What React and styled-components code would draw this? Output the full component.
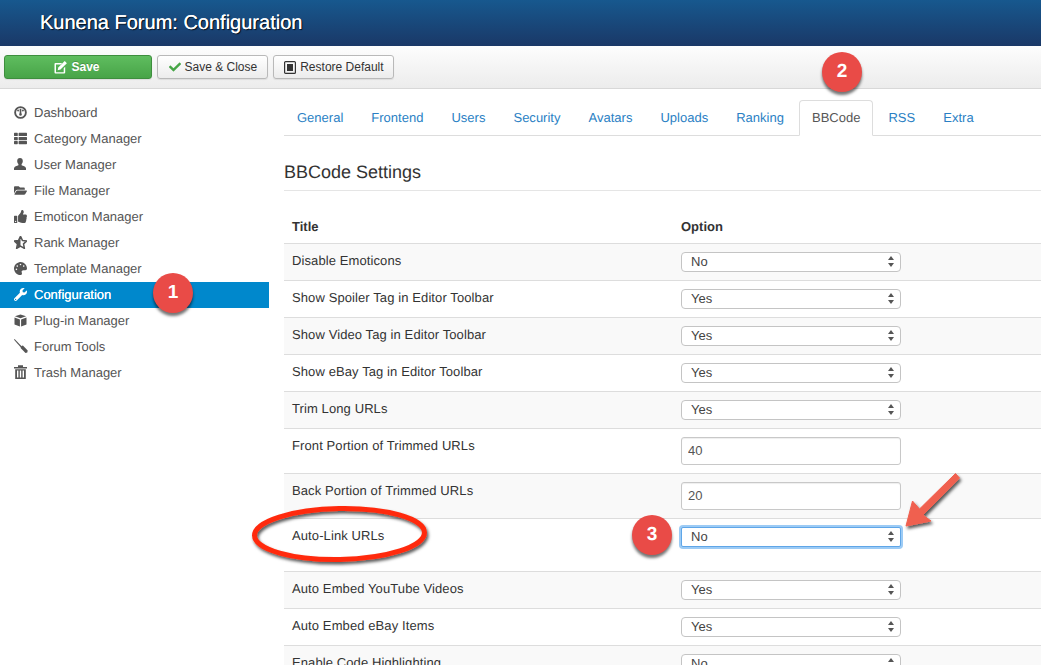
import React from "react";
import styled, { createGlobalStyle } from "styled-components";
import {
  FaThList,
  FaFolderOpen,
  FaThumbsUp,
  FaPalette,
  FaWrench,
  FaCheck,
} from "react-icons/fa";

const GlobalStyle = createGlobalStyle`
  html, body {
    margin: 0;
    padding: 0;
    height: 665px;
    overflow: hidden;
    background: #fff;
  }
  body {
    font-family: "Liberation Sans", Arial, sans-serif;
    font-size: 13px;
    color: #333;
    text-rendering: geometricPrecision;
  }
`;

function DashboardIcon() {
  return (
    <svg width="13" height="13" viewBox="0 0 14 14">
      <circle cx="7" cy="7" r="5.8" fill="none" stroke="currentColor" strokeWidth="2" />
      <path d="M6.1 3h1.8v5.5H6.1zM3.2 4.6l1.3-1 1.1 1.6-1.3 1zM10.8 4.6l-1.3-1-1.1 1.6 1.3 1z" fill="currentColor" />
      <circle cx="7" cy="9.2" r="1.4" fill="currentColor" />
    </svg>
  );
}

function UserIcon() {
  return (
    <svg width="12" height="12" viewBox="0 0 12 12">
      <path
        d="M6 0C4.2 0 3.2 1.3 3.2 3c0 1.2.5 2.4 1.2 3.1v1.1C3 7.9.3 8.4 0 10.2V12h12v-1.8c-.3-1.8-3-2.3-4.4-3V6.1C8.3 5.4 8.8 4.2 8.8 3 8.8 1.3 7.8 0 6 0z"
        fill="currentColor"
      />
    </svg>
  );
}

function StarIcon() {
  return (
    <svg width="13" height="13" viewBox="0 0 13 13">
      <path
        d="M6.5.3l1.9 4.1 4.4.5-3.3 3 .9 4.5-3.9-2.3-3.9 2.3.9-4.5L.2 4.9l4.4-.5z"
        fill="none"
        stroke="currentColor"
        strokeWidth="1.5"
        strokeLinejoin="round"
      />
      <path d="M6.5 1v9.4L2.9 12.3l.9-4.5L.6 5l4.3-.5z" fill="currentColor" />
    </svg>
  );
}

function PluginIcon() {
  return (
    <svg width="13" height="13" viewBox="0 0 13 13">
      <path d="M6.5.4l5.6 1.9-5.6 2L.9 2.3z" fill="currentColor" />
      <path d="M.5 3.4l5.4 2v7.2L.5 10.4zM12.5 3.4l-5.4 2v7.2l5.4-2.2z" fill="currentColor" />
    </svg>
  );
}

function ToolsIcon() {
  return (
    <svg width="14" height="14" viewBox="0 0 14 14">
      <path d="M.6 0l7.2 7.6-.9.9L0 .8z" fill="currentColor" />
      <path d="M7.4 7l1.5-.4 4.8 5-.4 1.9-1.8.4-4.9-5z" fill="currentColor" />
    </svg>
  );
}

function TrashIcon() {
  return (
    <svg width="13" height="14" viewBox="0 0 13 14">
      <path d="M0 2h13v1.6H0zM4 .3h5V2H4z" fill="currentColor" />
      <path d="M1.2 4.3h10.6V14H1.2zM3 5.5v7h1.4v-7zM5.8 5.5v7h1.4v-7zM8.6 5.5v7H10v-7z" fill="currentColor" fillRule="evenodd" />
    </svg>
  );
}

function RestoreIcon() {
  return (
    <svg width="12" height="13" viewBox="0 0 12 13">
      <rect x="0.6" y="0.6" width="10.8" height="11.8" rx="1" fill="none" stroke="#333" strokeWidth="1.2" />
      <rect x="3" y="3" width="6" height="7" fill="#333" />
    </svg>
  );
}

function EditIcon() {
  return (
    <svg width="13" height="13" viewBox="0 0 13 13">
      <path d="M1.8 2h6.4L6.7 3.5H2v7.7h7.7V7.2l1.5-1.5v5.8c0 .5-.4.9-.9.9H1.4c-.5 0-.9-.4-.9-.9V3c0-.6.6-1 1.3-1z" fill="#fff" />
      <path d="M10.7 0l2.2 2.2-6.4 6.4-2.8.6.6-2.8z" fill="#fff" />
    </svg>
  );
}

const menuItems = [
  { label: "Dashboard", icon: <DashboardIcon /> },
  { label: "Category Manager", icon: <FaThList size={13} /> },
  { label: "User Manager", icon: <UserIcon /> },
  { label: "File Manager", icon: <FaFolderOpen size={13} /> },
  { label: "Emoticon Manager", icon: <FaThumbsUp size={13} /> },
  { label: "Rank Manager", icon: <StarIcon /> },
  { label: "Template Manager", icon: <FaPalette size={13} /> },
  { label: "Configuration", icon: <FaWrench size={13} />, active: true },
  { label: "Plug-in Manager", icon: <PluginIcon /> },
  { label: "Forum Tools", icon: <ToolsIcon /> },
  { label: "Trash Manager", icon: <TrashIcon /> },
];

const tabs = ["General", "Frontend", "Users", "Security", "Avatars", "Uploads", "Ranking", "BBCode", "RSS", "Extra"];

const rows = [
  { title: "Disable Emoticons", value: "No" },
  { title: "Show Spoiler Tag in Editor Toolbar", value: "Yes" },
  { title: "Show Video Tag in Editor Toolbar", value: "Yes" },
  { title: "Show eBay Tag in Editor Toolbar", value: "Yes" },
  { title: "Trim Long URLs", value: "Yes" },
  { title: "Front Portion of Trimmed URLs", input: "40" },
  { title: "Back Portion of Trimmed URLs", input: "20" },
  { title: "Auto-Link URLs", value: "No", focused: true },
  { title: "Auto Embed YouTube Videos", value: "Yes" },
  { title: "Auto Embed eBay Items", value: "Yes" },
  { title: "Enable Code Highlighting", value: "No" },
];

function SelectField({ value, focused }) {
  return (
    <SelectWrap>
      <Select defaultValue={value} $focused={focused}>
        <option>Yes</option>
        <option>No</option>
      </Select>
      <Arrows width="6" height="11" viewBox="0 0 6 11">
        <path d="M3 0L6 4H0zM3 11L0 7h6z" fill="#555" />
      </Arrows>
    </SelectWrap>
  );
}

export default function App() {
  return (
    <Page>
      <GlobalStyle />
      <Header>
        <PageTitle>Kunena Forum: Configuration</PageTitle>
      </Header>
      <Toolbar>
        <SaveButton>
          <EditIcon />
          Save
        </SaveButton>
        <Button>
          <FaCheck size={12} color="#46a546" />
          Save &amp; Close
        </Button>
        <Button>
          <RestoreIcon />
          Restore Default
        </Button>
      </Toolbar>
      <Body>
        <Sidebar>
          {menuItems.map((item) => (
            <MenuItem key={item.label} $active={item.active}>
              <MenuIcon>{item.icon}</MenuIcon>
              {item.label}
            </MenuItem>
          ))}
        </Sidebar>
        <Content>
          <Tabs>
            {tabs.map((t) => (
              <Tab key={t} $active={t === "BBCode"}>
                {t}
              </Tab>
            ))}
          </Tabs>
          <Heading>BBCode Settings</Heading>
          <Table>
            <thead>
              <tr>
                <HeadCell $width={389}>Title</HeadCell>
                <HeadCell>Option</HeadCell>
              </tr>
            </thead>
            <tbody>
              {rows.map((r) => (
                <Row key={r.title}>
                  <Cell>{r.title}</Cell>
                  <Cell $extra={r.focused}>
                    {r.input ? (
                      <TextInput defaultValue={r.input} />
                    ) : (
                      <SelectField value={r.value} focused={r.focused} />
                    )}
                  </Cell>
                </Row>
              ))}
            </tbody>
          </Table>
        </Content>
      </Body>

      <Badge $x={173} $y={293}>1</Badge>
      <Badge $x={842} $y={72}>2</Badge>
      <Badge $x={652} $y={535}>3</Badge>

      <Marks width="1041" height="665" viewBox="0 0 1041 665">
        <defs>
          <filter id="markShadow" x="-20%" y="-20%" width="140%" height="150%">
            <feDropShadow dx="1.5" dy="2.5" stdDeviation="1.5" floodColor="#000" floodOpacity="0.65" />
          </filter>
        </defs>
        <g filter="url(#markShadow)">
          <ellipse cx="339.5" cy="534" rx="85" ry="25.5" fill="none" stroke="#ff2a0c" strokeWidth="5" transform="rotate(-1 339.5 534)" />
          <path
            d="M955.5 473.5 L959.5 478 L923 515 L931 521 L906 526 L912.5 501 L919.5 509 Z"
            fill="#f0604f"
            stroke="#f0604f"
            strokeWidth="1"
            strokeLinejoin="round"
          />
        </g>
      </Marks>
    </Page>
  );
}

const Page = styled.div`
  position: relative;
  width: 1041px;
  height: 665px;
  overflow: hidden;
`;

const Header = styled.header`
  height: 46px;
  display: flex;
  align-items: center;
  padding: 0 0 0 40px;
  box-sizing: border-box;
  background: linear-gradient(to bottom, #17588e 0%, #1a3867 100%);
`;

const PageTitle = styled.h1`
  margin: 0;
  font-size: 20px;
  font-weight: 400;
  line-height: 46px;
  color: #fff;
  text-shadow: 0 0 0.6px #fff, 1px 1px 1px rgba(0, 0, 0, 0.8);
`;

const Toolbar = styled.div`
  height: 43px;
  box-sizing: border-box;
  display: flex;
  align-items: flex-start;
  gap: 5px;
  padding: 9px 0 0 4px;
  background: linear-gradient(to bottom, #fdfdfd 0%, #ececec 100%);
  border-bottom: 1px solid #d8d8d8;
`;

const Button = styled.button`
  height: 24px;
  box-sizing: border-box;
  display: inline-flex;
  align-items: center;
  justify-content: center;
  gap: 4px;
  padding: 0 9.5px 0 10.5px;
  font-family: inherit;
  font-size: 12px;
  color: #333;
  background: linear-gradient(to bottom, #fff 0%, #ececec 100%);
  border: 1px solid #b9b9b9;
  border-radius: 3px;
  box-shadow: 0 1px 1px rgba(0, 0, 0, 0.08);
`;

const SaveButton = styled(Button)`
  width: 148px;
  padding: 0 2px 0 0;
  font-weight: 700;
  color: #fff;
  background: linear-gradient(to bottom, #5fbd5f 0%, #48a448 100%);
  border-color: #3e8e3e;
  text-shadow: 0 -1px 0 rgba(0, 0, 0, 0.2);
`;

const Body = styled.div`
  display: flex;
`;

const Sidebar = styled.nav`
  width: 269px;
  flex: none;
  padding-top: 11px;
`;

const MenuItem = styled.a`
  display: flex;
  align-items: center;
  height: 26px;
  box-sizing: border-box;
  padding: 0 0 2px 14px;
  color: ${(p) => (p.$active ? "#fff" : "#555")};
  background: ${(p) => (p.$active ? "#0088cc" : "transparent")};
  text-shadow: ${(p) => (p.$active ? "0 0 0.6px #fff" : "none")};
`;

const MenuIcon = styled.span`
  width: 20px;
  flex: none;
  display: flex;
  align-items: center;
`;

const Content = styled.main`
  flex: 1;
  min-width: 0;
  padding: 11px 0 0 15px;
`;

const Tabs = styled.div`
  display: flex;
  height: 36px;
  box-sizing: border-box;
  border-bottom: 1px solid #ddd;
`;

const Tab = styled.a`
  height: ${(p) => (p.$active ? "36px" : "35px")};
  box-sizing: border-box;
  padding: 0 ${(p) => (p.$active ? "12px" : "13px")};
  margin-right: 2px;
  line-height: ${(p) => (p.$active ? "33px" : "35px")};
  letter-spacing: 0.01px;
  color: ${(p) => (p.$active ? "#555" : "#2a7fc4")};
  border: ${(p) => (p.$active ? "1px solid #ddd" : "0 solid transparent")};
  border-bottom: ${(p) => (p.$active ? "1px solid #fff" : "0")};
  background: #fff;
  border-radius: 4px 4px 0 0;
`;

const Heading = styled.h2`
  margin: 24px 0 17px;
  padding-bottom: 6px;
  font-size: 18px;
  line-height: 24px;
  font-weight: 400;
  color: #333;
  border-bottom: 1px solid #e5e5e5;
`;

const Table = styled.table`
  width: 757px;
  border-collapse: collapse;
  table-layout: fixed;
`;

const HeadCell = styled.th`
  width: ${(p) => (p.$width ? `${p.$width}px` : "auto")};
  height: 35px;
  padding: 2px 8px 0;
  box-sizing: border-box;
  text-align: left;
  font-size: 13px;
  font-weight: 700;
  color: #333;
  border-bottom: 1px solid #ddd;
`;

const Row = styled.tr`
  border-bottom: 1px solid #ddd;
  &:nth-child(odd) {
    background: #f9f9f9;
  }
`;

const Cell = styled.td`
  padding: 8px 8px ${(p) => (p.$extra ? "24px" : "8px")};
  vertical-align: top;
  line-height: 18px;
  letter-spacing: 0.1px;
  color: #333;
`;

const SelectWrap = styled.div`
  position: relative;
  width: 220px;
  height: 20px;
`;

const Select = styled.select`
  appearance: none;
  display: block;
  width: 100%;
  height: 100%;
  box-sizing: border-box;
  padding: 0 20px 0 9px;
  font-family: inherit;
  font-size: 13px;
  color: #444;
  background: #fff;
  border: 1px solid ${(p) => (p.$focused ? "#5fa6e8" : "#c4c4c4")};
  border-radius: ${(p) => (p.$focused ? "2px" : "4px")};
  box-shadow: ${(p) => (p.$focused ? "0 0 0 2px #9ccbf5" : "none")};
  outline: none;
`;

const Arrows = styled.svg`
  position: absolute;
  right: 7px;
  top: 4px;
  pointer-events: none;
`;

const TextInput = styled.input`
  display: block;
  width: 220px;
  height: 28px;
  box-sizing: border-box;
  padding: 0 6px;
  font-family: inherit;
  font-size: 13px;
  color: #555;
  background: #fff;
  border: 1px solid #c8c8c8;
  border-radius: 3px;
  box-shadow: inset 0 1px 1px rgba(0, 0, 0, 0.07);
`;

const Badge = styled.div`
  position: absolute;
  left: ${(p) => p.$x - 20}px;
  top: ${(p) => p.$y - 20}px;
  width: 40px;
  height: 40px;
  border-radius: 50%;
  display: flex;
  align-items: center;
  justify-content: center;
  font-size: 19px;
  font-weight: 700;
  color: #fff;
  background: #e94b47;
  box-shadow: 0 3px 3px rgba(0, 0, 0, 0.55);
`;

const Marks = styled.svg`
  position: absolute;
  left: 0;
  top: 0;
  pointer-events: none;
`;
